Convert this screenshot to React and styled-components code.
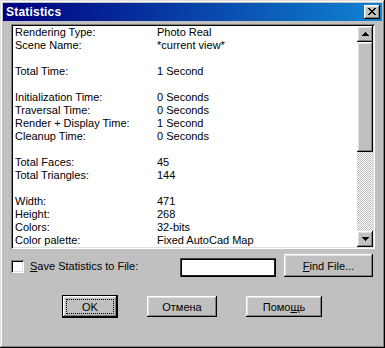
import React from "react";
import styled, { createGlobalStyle, css } from "styled-components";

const Global = createGlobalStyle`
  html, body { margin: 0; padding: 0; background: #c0c0c0; }
  body { font-family: "Liberation Sans", Arial, sans-serif; font-size: 11px; color: #000; }
  * { box-sizing: border-box; }
`;

const bevelOut = css`
  box-shadow: inset -1px -1px #000, inset 1px 1px #fff, inset -2px -2px #808080, inset 2px 2px #dfdfdf;
`;

const Window = styled.div`
  width: 385px;
  height: 348px;
  background: #c0c0c0;
  padding: 3px;
  display: flex;
  flex-direction: column;
  box-shadow: inset -1px -1px #000, inset 1px 1px #dfdfdf, inset -2px -2px #808080, inset 2px 2px #fff;
`;

const TitleBar = styled.div`
  height: 18px;
  background: linear-gradient(90deg, #000080, #1084d0);
  display: flex;
  align-items: center;
  justify-content: space-between;
  padding: 0 2px 0 3px;
`;

const Title = styled.span`
  color: #fff;
  font-weight: bold;
  font-size: 12px;
  letter-spacing: 0.2px;
`;

const CloseButton = styled.div`
  width: 16px;
  height: 14px;
  background: #c0c0c0;
  ${bevelOut};
  display: flex;
  align-items: center;
  justify-content: center;
  padding-bottom: 1px;
`;

const Body = styled.div`
  padding: 3px 4px 0 8px;
  display: flex;
  flex-direction: column;
`;

const ListBox = styled.div`
  width: 364px;
  height: 225px;
  background: #fff;
  padding: 2px;
  display: flex;
  box-shadow: inset 1px 1px #808080, inset -1px -1px #fff, inset 2px 2px #000, inset -2px -2px #dfdfdf;
`;

const Rows = styled.div`
  flex: 1;
  padding-left: 2px;
  display: grid;
  grid-template-columns: 142px 1fr;
  grid-auto-rows: 13px;
  line-height: 13px;
  font-size: 11px;
`;

const Cell = styled.div`
  white-space: nowrap;
`;

const Scrollbar = styled.div`
  width: 16px;
  display: flex;
  flex-direction: column;
`;

const ScrollButton = styled.div`
  width: 16px;
  height: 16px;
  flex: none;
  background: #c0c0c0;
  ${bevelOut};
  display: flex;
  align-items: center;
  justify-content: center;
`;

const Thumb = styled.div`
  width: 16px;
  height: 110px;
  flex: none;
  background: #c0c0c0;
  ${bevelOut};
`;

const Track = styled.div`
  flex: 1;
  background: repeating-conic-gradient(#c0c0c0 0 25%, #fff 0 50%) 0 0 / 2px 2px;
`;

const SaveRow = styled.div`
  display: flex;
  align-items: center;
  height: 22px;
  margin-top: 6px;
`;

const CheckBox = styled.div`
  width: 13px;
  height: 13px;
  background: #fff;
  flex: none;
  margin-left: 0;
  box-shadow: inset 1px 1px #808080, inset -1px -1px #fff, inset 2px 2px #000, inset -2px -2px #dfdfdf;
`;

const Label = styled.span`
  margin-left: 6px;
  width: 150px;
  white-space: nowrap;
`;

const U = styled.span`
  text-decoration: underline;
  text-underline-offset: 1px;
`;

const TextField = styled.div`
  width: 96px;
  height: 19px;
  background: #fff;
  margin-top: 2px;
  box-shadow: inset 1px 1px #404040, inset -1px -1px #000, inset 2px 2px #000, inset -2px -2px #202020;
`;

const Button = styled.div`
  width: ${p => p.$w}px;
  height: ${p => p.$h || 22}px;
  background: #c0c0c0;
  ${bevelOut};
  display: flex;
  align-items: center;
  justify-content: center;
  flex: none;
  white-space: nowrap;
  position: relative;
  ${p => p.$default && css`
    box-shadow: inset 0 0 0 1px #000, inset -2px -2px #000, inset 2px 2px #fff, inset -3px -3px #808080, inset 3px 3px #dfdfdf;
  `}
`;

const Focus = styled.div`
  position: absolute;
  inset: 4px;
  border: 1px dotted #000;
  pointer-events: none;
`;

const FindButton = styled(Button)`
  margin-left: 8px;
  margin-top: -1px;
`;

const ButtonRow = styled.div`
  display: flex;
  align-items: center;
  gap: 29px;
  margin-top: 18px;
  padding-left: 51px;
`;

const rows = [
  ["Rendering Type:", "Photo Real"],
  ["Scene Name:", "*current view*"],
  ["", ""],
  ["Total Time:", "1 Second"],
  ["", ""],
  ["Initialization Time:", "0 Seconds"],
  ["Traversal Time:", "0 Seconds"],
  ["Render + Display Time:", "1 Second"],
  ["Cleanup Time:", "0 Seconds"],
  ["", ""],
  ["Total Faces:", "45"],
  ["Total Triangles:", "144"],
  ["", ""],
  ["Width:", "471"],
  ["Height:", "268"],
  ["Colors:", "32-bits"],
  ["Color palette:", "Fixed AutoCad Map"],
];

const Arrow = ({ down }) => (
  <svg width="7" height="4" viewBox="0 0 7 4" style={{ transform: down ? "rotate(180deg)" : "none" }}>
    <path d="M3 0h1v1h1v1h1v1h1v1H0V3h1V2h1V1h1z" fill="#000" shapeRendering="crispEdges" />
  </svg>
);

export default function App() {
  return (
    <>
      <Global />
      <Window>
        <TitleBar>
          <Title>Statistics</Title>
          <CloseButton>
            <svg width="8" height="7" viewBox="0 0 8 7">
              <path
                d="M0 0h2v1h1v1h2V1h1V0h2v1H7v1H6v1H5v1h1v1h1v1h1v1H6V6H5V5H3v1H2v1H0V6h1V5h1V4h1V3H2V2H1V1H0z"
                fill="#000"
                shapeRendering="crispEdges"
              />
            </svg>
          </CloseButton>
        </TitleBar>
        <Body>
          <ListBox>
            <Rows>
              {rows.map(([a, b], i) => (
                <React.Fragment key={i}>
                  <Cell>{a}</Cell>
                  <Cell>{b}</Cell>
                </React.Fragment>
              ))}
            </Rows>
            <Scrollbar>
              <ScrollButton><Arrow /></ScrollButton>
              <Thumb />
              <Track />
              <ScrollButton><Arrow down /></ScrollButton>
            </Scrollbar>
          </ListBox>
          <SaveRow>
            <CheckBox />
            <Label><U>S</U>ave Statistics to File:</Label>
            <TextField />
            <FindButton $w={89} $h={23}><span><U>F</U>ind File...</span></FindButton>
          </SaveRow>
          <ButtonRow>
            <Button $w={56} $h={23} $default>OK<Focus /></Button>
            <Button $w={70} $h={21}>Отмена</Button>
            <Button $w={76} $h={21}>Помо<U>щ</U>ь</Button>
          </ButtonRow>
        </Body>
      </Window>
    </>
  );
}
